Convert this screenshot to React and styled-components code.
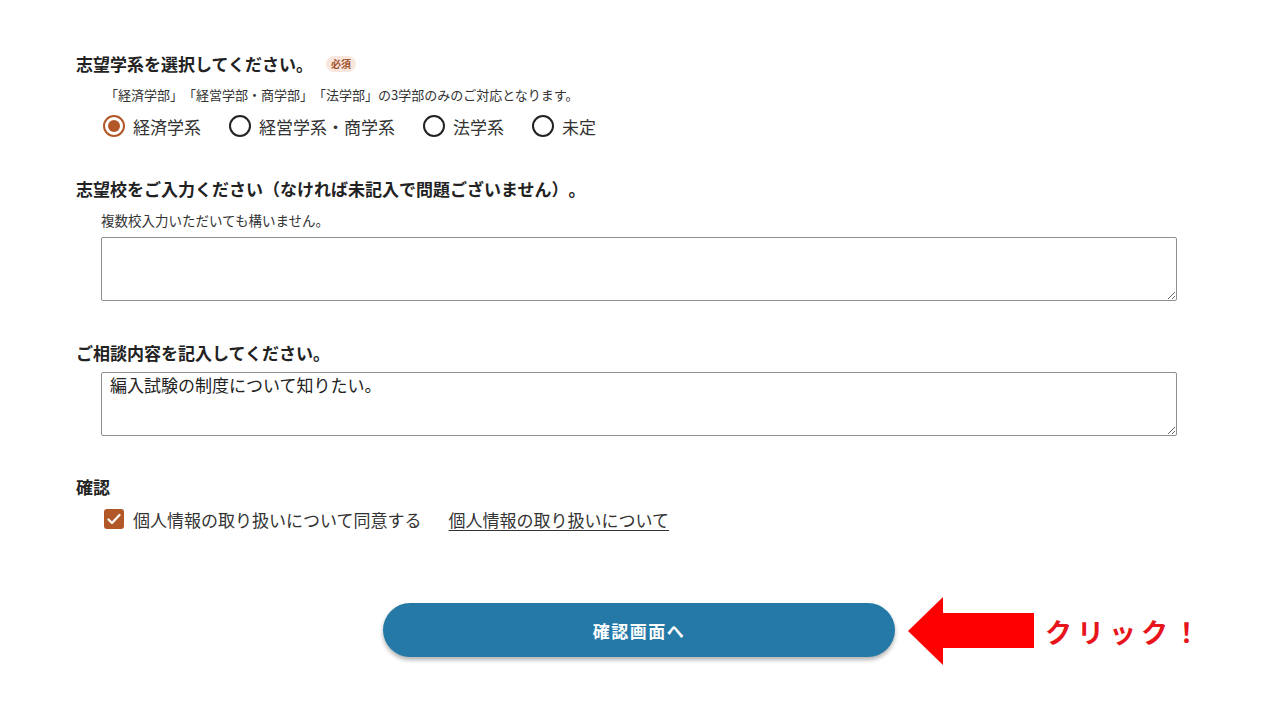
import React from 'react'
import styled, { createGlobalStyle } from 'styled-components'

const GlobalStyle = createGlobalStyle`
    body {
        margin: 0;
        background: #ffffff;
        font-family: "Noto Sans CJK JP", "Noto Sans", sans-serif;
        color: #333333;
        text-spacing-trim: space-all;
    }
`

const Page = styled.div`
    width: 1280px;
    height: 720px;
    box-sizing: border-box;
    padding: 52px 103px 0 76px;
    overflow: hidden;
`

const Section = styled.div`
    margin-bottom: ${p => p.$gap || 39}px;
`

const TitleRow = styled.div`
    display: flex;
    align-items: center;
    gap: 13px;
`

const Title = styled.h2`
    margin: 0;
    font-size: 17px;
    line-height: 24px;
    font-weight: 700;
    color: #222;
`

const Badge = styled.span`
    display: inline-block;
    padding: 0 5px;
    height: 16px;
    line-height: 16px;
    border-radius: 8px;
    background: #f8e7df;
    color: #a5532d;
    font-size: 10px;
    font-weight: 700;
`

const Note = styled.p`
    margin: 10px 0 0 ${p => p.$indent || 25}px;
    font-size: ${p => p.$size || 13.5}px;
    line-height: 18px;
    color: #333;
`

const RadioRow = styled.div`
    display: flex;
    align-items: center;
    gap: 28px;
    margin: 10px 0 0 27px;
    height: 24px;
`

const RadioLabel = styled.label`
    display: flex;
    align-items: center;
    gap: 8px;
    font-size: 17px;
    color: #333;
`

const RadioCircle = styled.span`
    width: 22px;
    height: 22px;
    box-sizing: border-box;
    border-radius: 50%;
    border: 2px solid ${p => (p.$checked ? '#b25728' : '#222')};
    display: flex;
    align-items: center;
    justify-content: center;
    &::after {
        content: '';
        width: 12px;
        height: 12px;
        border-radius: 50%;
        background: #b25728;
        display: ${p => (p.$checked ? 'block' : 'none')};
    }
`

const TextArea = styled.textarea`
    display: block;
    margin: ${p => p.$top || 8}px 0 0 25px;
    width: 1076px;
    height: 64px;
    box-sizing: border-box;
    border: 1px solid #8f8f8f;
    border-radius: 2px;
    padding: 0 8px;
    font-family: "Noto Sans CJK JP", "Noto Sans", sans-serif;
    font-size: 17px;
    line-height: 24px;
    color: #222;
    resize: vertical;
`

const CheckRow = styled.div`
    display: flex;
    align-items: center;
    margin: 8px 0 0 28px;
    height: 24px;
`

const CheckBox = styled.span`
    width: 20px;
    height: 20px;
    border-radius: 3px;
    background: #b25728;
    display: flex;
    align-items: center;
    justify-content: center;
    margin-right: 9px;
`

const CheckText = styled.span`
    font-size: 17px;
    color: #333;
`

const Link = styled.a`
    margin-left: 27px;
    font-size: 17px;
    color: #333;
    text-decoration: underline;
    text-underline-offset: 3px;
`

const ButtonArea = styled.div`
    display: flex;
    justify-content: center;
    margin: 72px 0 0 -76px;
    width: 1280px;
`

const ButtonWrap = styled.div`
    position: relative;
    margin-left: -2px;
`

const SubmitButton = styled.button`
    width: 512px;
    height: 54px;
    border: none;
    border-radius: 27px;
    background: #2479a6;
    color: #ffffff;
    font-family: "Noto Sans CJK JP", "Noto Sans", sans-serif;
    font-size: 17px;
    font-weight: 700;
    letter-spacing: 1.5px;
    box-shadow: 0 3px 4px rgba(0, 0, 0, 0.3);
`

const Callout = styled.div`
    position: absolute;
    left: 525px;
    top: -6px;
    display: flex;
    align-items: center;
    gap: 11px;
    white-space: nowrap;
`

const CalloutText = styled.span`
    font-family: "Noto Sans CJK JP", sans-serif;
    font-size: 27px;
    font-weight: 700;
    color: #e8141b;
    letter-spacing: 5px;
`

const Radio = ({ label, checked }) => (
    <RadioLabel>
        <RadioCircle $checked={checked} />
        {label}
    </RadioLabel>
)

const App = () => {
    return (
        <>
            <GlobalStyle />
            <Page>
                <Section>
                    <TitleRow>
                        <Title>志望学系を選択してください。</Title>
                        <Badge>必須</Badge>
                    </TitleRow>
                    <Note $indent={29} $size={13}>「経済学部」「経営学部・商学部」「法学部」の3学部のみのご対応となります。</Note>
                    <RadioRow>
                        <Radio label="経済学系" checked />
                        <Radio label="経営学系・商学系" />
                        <Radio label="法学系" />
                        <Radio label="未定" />
                    </RadioRow>
                </Section>

                <Section $gap={40}>
                    <Title>志望校をご入力ください（なければ未記入で問題ございません）。</Title>
                    <Note>複数校入力いただいても構いません。</Note>
                    <TextArea />
                </Section>

                <Section>
                    <Title>ご相談内容を記入してください。</Title>
                    <TextArea $top={7} defaultValue="編入試験の制度について知りたい。" />
                </Section>

                <Section $gap={0}>
                    <Title>確認</Title>
                    <CheckRow>
                        <CheckBox>
                            <svg width="14" height="12" viewBox="0 0 14 12">
                                <path d="M1.5 6.5 L5 10 L12.5 2" fill="none" stroke="#fff" strokeWidth="2.2" strokeLinecap="round" strokeLinejoin="round" />
                            </svg>
                        </CheckBox>
                        <CheckText>個人情報の取り扱いについて同意する</CheckText>
                        <Link href="#">個人情報の取り扱いについて</Link>
                    </CheckRow>
                </Section>

                <ButtonArea>
                    <ButtonWrap>
                        <SubmitButton>確認画面へ</SubmitButton>
                        <Callout>
                            <svg width="126" height="68" viewBox="0 0 126 68">
                                <polygon points="0,34 35,0 35,16 126,16 126,51 35,51 35,68" fill="#ff0000" />
                            </svg>
                            <CalloutText>クリック！</CalloutText>
                        </Callout>
                    </ButtonWrap>
                </ButtonArea>
            </Page>
        </>
    )
}

export default App
